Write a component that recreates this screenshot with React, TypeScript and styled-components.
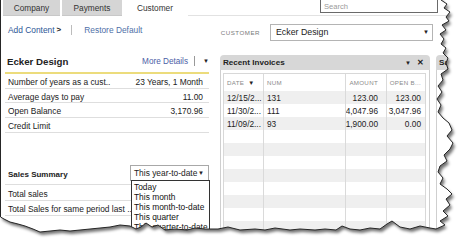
import React from 'react';
import styled, { createGlobalStyle } from 'styled-components';

const GlobalStyle = createGlobalStyle`
  html, body {
    margin: 0;
    padding: 0;
    background: #fff;
  }
  body {
    font-family: "Liberation Sans", Arial, sans-serif;
    color: #222;
  }
`;

const Screen = styled.div`
  position: relative;
  width: 458px;
  height: 241px;
  overflow: hidden;
  background: #fff;
  font-size: 8.3px;
`;

const TabBar = styled.div`
  display: flex;
  align-items: flex-start;
  height: 16px;
  padding-left: 3px;
  gap: 2px;
`;

const Tab = styled.div<{ $active?: boolean; $w: number }>`
  width: ${(p) => p.$w}px;
  height: 16px;
  display: flex;
  align-items: center;
  justify-content: center;
  font-size: 8.3px;
  color: #333;
  background: ${(p) => (p.$active ? '#fff' : '#d5d5d5')};
  border-bottom: ${(p) => (p.$active ? 'none' : '1px solid #c8c8c8')};
  box-sizing: border-box;
`;

const TabFill = styled.div`
  flex: 1;
  height: 16px;
  border-bottom: 1px solid #e2e2e2;
  box-sizing: border-box;
  display: flex;
  justify-content: flex-end;
  padding-right: 20px;
`;

const SearchBox = styled.div`
  width: 118px;
  height: 14px;
  margin-top: -1px;
  border: 1px solid #6a6a6a;
  box-sizing: border-box;
  background: #fff;
  color: #9a9a9a;
  font-size: 7.6px;
  padding-left: 3px;
  display: flex;
  align-items: center;
`;

const Toolbar = styled.div`
  display: flex;
  align-items: center;
  height: 30px;
  padding: 0 25px 0 8px;
`;

const Links = styled.div`
  display: flex;
  align-items: center;
  margin-top: -3px;
`;

const LinkText = styled.span<{ $tone: string }>`
  color: ${(p) => p.$tone};
  font-size: 8.4px;
`;

const Chevron = styled.span`
  color: #222;
  font-weight: bold;
  font-size: 8px;
  margin-left: 2px;
`;

const Divider = styled.span`
  width: 1px;
  height: 10px;
  background: #bcbcbc;
  margin: 0 12px 0 10px;
`;

const CustomerPicker = styled.div`
  margin-left: auto;
  display: flex;
  align-items: center;
  gap: 10px;
  margin-top: 2px;
`;

const SmallCaps = styled.span`
  font-size: 6.2px;
  letter-spacing: 0.5px;
  color: #7a7a7a;
`;

const Combo = styled.div`
  width: 163px;
  height: 17px;
  box-sizing: border-box;
  border: 1px solid #b4b4b4;
  display: flex;
  align-items: center;
  justify-content: space-between;
  padding: 0 3px 0 5px;
  font-size: 8.8px;
  color: #222;
`;

const Caret = styled.span`
  font-size: 6px;
  color: #222;
`;

const Main = styled.div`
  display: flex;
  align-items: flex-start;
`;

const LeftColumn = styled.div`
  width: 204px;
  margin-left: 5px;
  display: flex;
  flex-direction: column;
`;

const CustomerHead = styled.div`
  height: 28px;
  padding-top: 4px;
  box-sizing: border-box;
  display: flex;
  align-items: center;
  border-bottom: 2px solid #ecdc7c;
`;

const CustomerName = styled.div`
  font-weight: bold;
  font-size: 9.7px;
  padding-left: 2px;
  flex: 1;
`;

const MoreDetails = styled.span`
  color: #4b5ea6;
  font-size: 8.2px;
`;

const HeadDivider = styled.span`
  width: 1px;
  height: 10px;
  background: #999;
  margin: 0 8px 0 6px;
`;

const InfoRow = styled.div<{ $h: number }>`
  height: ${(p) => p.$h}px;
  box-sizing: border-box;
  border-bottom: 1px solid #dedede;
  display: flex;
  align-items: center;
  justify-content: space-between;
  padding: 2px 6px 0 3px;
  font-size: 8.4px;
  color: #222;
`;

const SalesHead = styled.div`
  height: 52px;
  box-sizing: border-box;
  border-bottom: 1px solid #dedede;
  display: flex;
  align-items: flex-end;
  justify-content: space-between;
  padding: 0 0 3px 3px;
`;

const SalesTitle = styled.div`
  font-weight: bold;
  font-size: 8px;
  margin-bottom: 2px;
`;

const PeriodSelect = styled.div`
  position: relative;
  width: 79px;
  height: 16px;
  box-sizing: border-box;
  border: 1px solid #a8a8a8;
  display: flex;
  align-items: center;
  justify-content: space-between;
  padding: 0 4px 0 3px;
  font-size: 8.4px;
`;

const PeriodList = styled.div`
  position: absolute;
  top: 14px;
  left: 0;
  width: 79px;
  box-sizing: border-box;
  border: 1px solid #333;
  background: #fff;
  padding: 1px 0 0 2px;
  z-index: 2;
`;

const PeriodItem = styled.div`
  height: 10px;
  line-height: 10px;
  font-size: 8.4px;
  color: #111;
  white-space: nowrap;
`;

const Panel = styled.div<{ $w?: number; $gap: number }>`
  width: ${(p) => (p.$w ? `${p.$w}px` : 'auto')};
  flex: ${(p) => (p.$w ? 'none' : '1')};
  margin-left: ${(p) => p.$gap}px;
  margin-top: 9px;
  display: flex;
  flex-direction: column;
`;

const PanelHead = styled.div`
  height: 15px;
  background: #d7d7d7;
  border-radius: 4px 4px 0 0;
  display: flex;
  align-items: center;
  justify-content: space-between;
  padding: 0 6px 0 3px;
  font-weight: bold;
  font-size: 8.1px;
  color: #222;
`;

const HeadIcons = styled.div`
  display: flex;
  align-items: center;
  gap: 6px;
  font-size: 8px;
`;

const PanelBody = styled.div`
  border: 1px solid #cfcfcf;
  border-top: none;
  padding: 3px 3px 0 2px;
  height: 170px;
`;

const Grid = styled.div`
  border: 1px solid #d8d8d8;
  display: flex;
  flex-direction: column;
`;

const GridRow = styled.div<{ $stripe?: boolean; $h: number }>`
  display: flex;
  height: ${(p) => p.$h}px;
  background: ${(p) => (p.$stripe ? '#efefef' : '#fff')};
`;

const Cell = styled.div<{ $w?: number; $pad?: number; $head?: boolean }>`
  width: ${(p) => (p.$w ? `${p.$w}px` : 'auto')};
  flex: ${(p) => (p.$w ? 'none' : '1')};
  box-sizing: border-box;
  display: flex;
  align-items: center;
  justify-content: ${(p) => (p.$pad ? 'flex-end' : 'flex-start')};
  padding: ${(p) => (p.$pad ? `0 ${p.$pad}px 0 0` : '0 0 0 3px')};
  border-right: 1px solid #dadada;
  font-size: ${(p) => (p.$head ? '6.2px' : '8.3px')};
  color: ${(p) => (p.$head ? '#8a8a8a' : '#222')};
  letter-spacing: ${(p) => (p.$head ? '0.3px' : '0')};
  white-space: nowrap;
  overflow: hidden;
  &:last-child {
    border-right: none;
  }
`;

const SortMark = styled.span`
  color: #222;
  margin-left: 4px;
  font-size: 6px;
`;

const EdgeLayer = styled.svg`
  position: absolute;
  left: 0;
  top: 0;
  pointer-events: none;
  z-index: 5;
`;

const invoices = [
  { date: '12/15/2...', num: '131', amount: '123.00', open: '123.00' },
  { date: '11/30/2...', num: '111', amount: '4,047.96', open: '3,047.96' },
  { date: '11/09/2...', num: '93', amount: '1,900.00', open: '0.00' },
];

const periods = ['Today', 'This month', 'This month-to-date', 'This quarter', 'This quarter-to-date'];

// torn paper outline, clockwise from top-left
const edgePts: [number, number][] = [
  [0.5, -3], [441, -3], [441, 0], [447, 4], [444, 8], [450, 12], [446, 17], [449, 21], [442, 25],
  [446, 30], [440, 34], [444, 39], [441, 44], [446, 48], [443, 53], [448, 58], [446, 63],
  [448, 69], [441, 74], [443, 80], [438, 86], [442, 92], [437, 99], [441, 105], [438, 112],
  [443, 118], [449, 123], [452, 130], [447, 136], [453, 143], [450, 149], [444, 155],
  [447, 161], [440, 166], [438, 172], [443, 178], [440, 184], [447, 189], [452, 194],
  [446, 199], [450, 205], [443, 211], [448, 216], [440, 221], [445, 225], [436, 229],
  [430, 228], [420, 226], [410, 229], [400, 227], [392, 221], [387, 224], [380, 229],
  [370, 228], [360, 230], [350, 229], [342, 226], [336, 230], [325, 229], [315, 230],
  [300, 229], [290, 230], [275, 228], [265, 230], [255, 229], [240, 230], [228, 227],
  [218, 229], [205, 229], [195, 228], [187, 230], [175, 229], [165, 230], [158, 225],
  [152, 227], [146, 223], [141, 227], [136, 229], [130, 226], [120, 225], [110, 227],
  [100, 228], [90, 229], [80, 230], [70, 231], [60, 230], [50, 231], [40, 232], [33, 229],
  [25, 226], [18, 224], [10, 222], [4, 219], [0.5, 217],
];

const innerPath = 'M' + edgePts.map(([x, y]) => `${x},${y}`).join(' L') + ' Z';
const outerPath = 'M-10,-10 H470 V260 H-10 Z ';

const TornEdge = () => (
  <EdgeLayer width={458} height={241} viewBox="0 0 458 241">
    <defs>
      <filter id="tear-blur" x="-10%" y="-10%" width="120%" height="120%">
        <feGaussianBlur stdDeviation="1.6" />
      </filter>
      <clipPath id="tear-outside">
        <path d={outerPath + innerPath} clipRule="evenodd" />
      </clipPath>
    </defs>
    <path d={outerPath + innerPath} fill="#fff" fillRule="evenodd" />
    <g clipPath="url(#tear-outside)">
      <path d={innerPath} fill="#000" fillOpacity={0.55} transform="translate(2,3)" filter="url(#tear-blur)" />
    </g>
    <path d={innerPath} fill="none" stroke="#262626" strokeWidth={1} />
  </EdgeLayer>
);

const App = () => {
  const emptyRows = Array.from({ length: 10 }, (_, i) => i);
  return (
    <>
      <GlobalStyle />
      <Screen>
        <TabBar>
          <Tab $w={57}>Company</Tab>
          <Tab $w={60}>Payments</Tab>
          <Tab $w={62} $active>Customer</Tab>
          <TabFill>
            <SearchBox>Search</SearchBox>
          </TabFill>
        </TabBar>

        <Toolbar>
          <Links>
            <LinkText $tone="#2c5696">Add Content</LinkText>
            <Chevron>&gt;</Chevron>
            <Divider />
            <LinkText $tone="#4f70a8">Restore Default</LinkText>
          </Links>
          <CustomerPicker>
            <SmallCaps>CUSTOMER</SmallCaps>
            <Combo>
              Ecker Design
              <Caret>▼</Caret>
            </Combo>
          </CustomerPicker>
        </Toolbar>

        <Main>
          <LeftColumn>
            <CustomerHead>
              <CustomerName>Ecker Design</CustomerName>
              <MoreDetails>More Details</MoreDetails>
              <HeadDivider />
              <Caret>▼</Caret>
            </CustomerHead>
            <InfoRow $h={14.7}>
              <span>Number of years as a cust..</span>
              <span>23 Years, 1 Month</span>
            </InfoRow>
            <InfoRow $h={14.7}>
              <span>Average days to pay</span>
              <span>11.00</span>
            </InfoRow>
            <InfoRow $h={14.7}>
              <span>Open Balance</span>
              <span>3,170.96</span>
            </InfoRow>
            <InfoRow $h={14.7}>
              <span>Credit Limit</span>
              <span />
            </InfoRow>
            <SalesHead>
              <SalesTitle>Sales Summary</SalesTitle>
              <PeriodSelect>
                This year-to-date
                <Caret>▼</Caret>
                <PeriodList>
                  {periods.map((p) => (
                    <PeriodItem key={p}>{p}</PeriodItem>
                  ))}
                </PeriodList>
              </PeriodSelect>
            </SalesHead>
            <InfoRow $h={16.5}>
              <span>Total sales</span>
            </InfoRow>
            <InfoRow $h={14.5}>
              <span>Total Sales for same period last ...</span>
            </InfoRow>
          </LeftColumn>

          <Panel $w={210} $gap={11}>
            <PanelHead>
              Recent Invoices
              <HeadIcons>
                <Caret>▼</Caret>
                <span>✕</span>
              </HeadIcons>
            </PanelHead>
            <PanelBody>
              <Grid>
                <GridRow $h={17}>
                  <Cell $head $w={40}>
                    DATE<SortMark>▼</SortMark>
                  </Cell>
                  <Cell $head $w={82}>NUM</Cell>
                  <Cell $head $w={41} $pad={8}>AMOUNT</Cell>
                  <Cell $head $pad={4}>OPEN B...</Cell>
                </GridRow>
                {invoices.map((inv, i) => (
                  <GridRow key={inv.num} $h={13} $stripe={i % 2 === 0}>
                    <Cell $w={40}>{inv.date}</Cell>
                    <Cell $w={82}>{inv.num}</Cell>
                    <Cell $w={41} $pad={8}>{inv.amount}</Cell>
                    <Cell $pad={4}>{inv.open}</Cell>
                  </GridRow>
                ))}
                {emptyRows.map((i) => (
                  <GridRow key={i} $h={13} $stripe={(i + 3) % 2 === 0}>
                    <Cell $w={40} />
                    <Cell $w={82} />
                    <Cell $w={41} />
                    <Cell />
                  </GridRow>
                ))}
              </Grid>
            </PanelBody>
          </Panel>

          <Panel $gap={6}>
            <PanelHead>Sa</PanelHead>
            <PanelBody />
          </Panel>
        </Main>

        <TornEdge />
      </Screen>
    </>
  );
};

export default App;
